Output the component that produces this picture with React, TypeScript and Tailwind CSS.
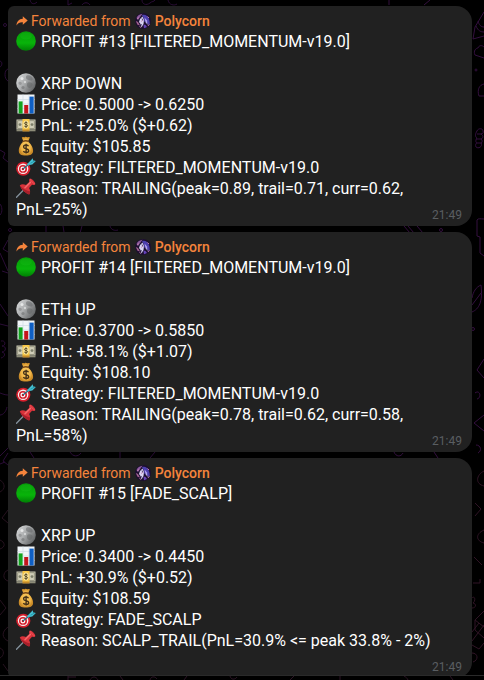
import type { ReactNode } from 'react';

type IconName = 'green' | 'moon' | 'chart' | 'money' | 'bag' | 'target' | 'pin';

type Message = {
    id: number;
    strategy: string;
    asset: string;
    price: string;
    pnl: string;
    equity: string;
    reason: string;
    time: string;
};

const messages: Message[] = [
    {
        id: 13,
        strategy: 'FILTERED_MOMENTUM-v19.0',
        asset: 'XRP DOWN',
        price: '0.5000 -> 0.6250',
        pnl: '+25.0% ($+0.62)',
        equity: '$105.85',
        reason: 'TRAILING(peak=0.89, trail=0.71, curr=0.62, PnL=25%)',
        time: '21:49',
    },
    {
        id: 14,
        strategy: 'FILTERED_MOMENTUM-v19.0',
        asset: 'ETH UP',
        price: '0.3700 -> 0.5850',
        pnl: '+58.1% ($+1.07)',
        equity: '$108.10',
        reason: 'TRAILING(peak=0.78, trail=0.62, curr=0.58, PnL=58%)',
        time: '21:49',
    },
    {
        id: 15,
        strategy: 'FADE_SCALP',
        asset: 'XRP UP',
        price: '0.3400 -> 0.4450',
        pnl: '+30.9% ($+0.52)',
        equity: '$108.59',
        reason: 'SCALP_TRAIL(PnL=30.9% <= peak 33.8% - 2%)',
        time: '21:49',
    },
];

// Emoji drawings, all on a 20x20 grid
const icons: Record<IconName, ReactNode> = {
    green: (
        <>
            <circle cx="10" cy="10" r="9.8" fill="url(#gGreen)" />
            <ellipse cx="10" cy="5" rx="6" ry="3.4" fill="#2fe02f" opacity="0.15" />
        </>
    ),
    moon: (
        <>
            <circle cx="10" cy="10" r="9.8" fill="url(#gMoon)" />
            <path d="M11 2.5c2.5-.6 5 1 5.6 3 .5 2-1 2.4-2.6 1.8-1.8-.5-4-.8-4-2.6 0-1 .2-2 1-2.2Z" fill="#626465" opacity="0.5" />
            <path d="M12 9.5c2-.6 5 .4 4.6 2.5-.6 2-2.6 3.600-4.300 2.600-1.600-1-2-4.400-.3-5.100Z" fill="#5a5c5d" opacity="0.4" />
            <path d="M3 9c1.5-.8 3 .3 2.8 1.8-.2 1.4-2.300 1.400-3 .4-.5-.8-.5-1.800.2-2.200Z" fill="#8a8c8d" opacity="0.7" />
            <circle cx="7" cy="14.5" r="1.6" fill="#77797a" opacity="0.7" />
            <circle cx="6" cy="5.5" r="1.5" fill="#f0f1f1" opacity="0.8" />
            <circle cx="9" cy="9" r="1.2" fill="#dfe0e0" opacity="0.8" />
        </>
    ),
    chart: (
        <>
            <rect x="1.5" y="0.5" width="17" height="19" fill="#f1f5f8" />
            <path d="M1.500 5.500h17M1.500 10h17M1.500 14.500h17M7 .5v19M13 .5v19" stroke="#cfdbe4" strokeWidth="0.7" />
            <rect x="2.6" y="7.4" width="4" height="12.1" fill="#13a41e" />
            <rect x="8.2" y="11" width="4" height="8.5" fill="#c4161c" />
            <rect x="13.5" y="2.6" width="4.2" height="16.9" fill="#0f5fc4" />
        </>
    ),
    money: (
        <>
            <path d="M.5 4.500h19v10H.5Z" fill="#cfcdb8" />
            <path d="M.5 14.500h19v1.800H.5Z" fill="#8d8c78" />
            <rect x="1.7" y="5.7" width="16.6" height="7.800" fill="none" stroke="#8b8b76" strokeWidth="0.8" />
            <circle cx="4" cy="9.600" r="1.400" fill="#7b7d69" />
            <circle cx="16" cy="9.600" r="1.400" fill="#7b7d69" />
            <path d="M6.500 4h7v11h-7Z" fill="#f6c545" />
            <path d="M6.500 14.500h7v2h-7Z" fill="#c48a2a" />
            <ellipse cx="10" cy="9.600" rx="2.800" ry="4" fill="#fbe9a6" />
            <path d="M11.600 8.100c-.5-.9-3.200-1.100-3.200.3 0 1.500 3.200.7 3.200 2.300 0 1.500-2.900 1.300-3.400.2M10 6.300v6.600" fill="none" stroke="#54441b" strokeWidth="0.9" />
        </>
    ),
    bag: (
        <>
            <path d="M7.500 5.600 5.800 1.800C6.200.3 8 1.600 9 .9c1-.7 1.700.6 2.700.3 1-.4 2.500-.5 2 .8l-1.800 3.600c2.600 1.800 5.200 5.600 5.200 9.200 0 3.500-2.700 4.700-7.300 4.700s-7-1.200-7-4.700c0-3.700 2.200-7.400 4.700-9.200Z" fill="url(#gBag)" />
            <path d="M7 5.400c1.800-.7 3.800-.7 5.500 0" stroke="#75481a" strokeWidth="1.5" fill="none" strokeLinecap="round" />
            <path d="M12.500 10.200c-.8-1.700-4.900-1.600-4.900.7 0 2.500 5.100 1.200 5.100 3.800 0 2.300-4.500 2.200-5.300.2M10.100 7.700v9.900" fill="none" stroke="#443018" strokeWidth="1.400" />
        </>
    ),
    target: (
        <>
            <ellipse cx="7.3" cy="11.8" rx="7.1" ry="7" fill="#d51f2c" />
            <ellipse cx="7.1" cy="11.8" rx="5.3" ry="5.2" fill="#f8eeee" />
            <ellipse cx="7" cy="11.9" rx="4" ry="3.9" fill="#d51f2c" />
            <ellipse cx="6.9" cy="12" rx="2.5" ry="2.4" fill="#fff" />
            <circle cx="6.9" cy="12" r="1.2" fill="#c31723" />
            <path d="m7 12 6.500-5.500" stroke="#1f6f83" strokeWidth="1.1" />
            <path d="m11.600 8 4-3.700" stroke="#3cbfd0" strokeWidth="2.3" />
            <path d="m13.200 5.500 3.400-4.300.7 2.300 2.600.6-3.600 3.500-2.800.3Z" fill="#45bfd0" />
            <path d="m14.500 6.200 4.300-2.300" stroke="#16899d" strokeWidth="0.7" />
        </>
    ),
    pin: (
        <>
            <path d="m.5 19.300 8-8.300" stroke="#83919c" strokeWidth="1.3" strokeLinecap="round" />
            <path d="M3.800 7.200c2-1.400 4.300-1 6.200-.1l3.300-3.200c-.4-1.500-.3-3 .6-3.300 1.400-.5 5.700 3.600 5.400 5.300-.2 1-1.800 1.200-3.300.9l-2.900 3.300c1.100 2 1.500 4.700.1 6.400-1.700-.4-3.600-1.600-5.300-3.200C6 11.500 4.400 9.300 3.800 7.200Z" fill="#d8323a" />
            <path d="M3.800 7.200c.8 2.100 2.200 4.300 4.100 6.100 1.700 1.600 3.600 2.800 5.300 3.200.8-1 1-2.100.9-3.300-3.100-.2-7.600-2.500-10.300-6Z" fill="#a9202b" />
            <path d="m9 9.700 5.400-5.300" stroke="#f3696b" strokeWidth="1.5" strokeLinecap="round" />
            <path d="M14.300 1.300c.7 1.700 2.500 3.600 4.500 4.700" stroke="#ee5559" strokeWidth="1" fill="none" />
        </>
    ),
};

function Emoji({ name }: { name: IconName }) {
    return (
        <svg viewBox="0 0 20 20" aria-hidden="true" className="inline-block size-5 mr-[5px] align-[-4px]">
            {icons[name]}
        </svg>
    );
}

function Avatar() {
    return (
        <svg viewBox="0 0 16 16" aria-hidden="true" className="size-4 ml-1 mr-1">
            <circle cx="8" cy="8" r="8" fill="#1d1030" />
            <path d="M1.500 5c1-2.500 3.500-4 6-4.200L5.500 3.500 3 7Z" fill="#8a5a9c" />
            <path d="M7 2c3-1 5.500.5 6.500 3s1.800 5 .8 7c-1.300-.5-2-2.500-2.800-4L9.500 9 8.500 5Z" fill="#4d3fae" />
            <path d="m5 6 2.500-2.500L9 7l-.5 4-2 3.500-1-3.500-1.500-2Z" fill="#d8d2f2" />
            <path d="m9.500 4.500 2.500 3 .7 4.500-2-2.500Z" fill="#b4a5ef" />
            <path d="m.8 8 2.200 1 2 3.500-2.500-.8Z" fill="#a2618f" />
            <path d="m8.500 11.500 2 .5 1.500 2-3 1.200Z" fill="#6644b8" />
            <path d="m2 6 2-1.500M6 8.500l1.500-1M12.500 3.500 14 5M13 13l1.300-1.800M4.500 13.500l1.500 1" stroke="#c682ae" strokeWidth="0.9" />
            <path d="m7 5.500.8 2M6 11l.7 1.500" stroke="#2b1c4f" strokeWidth="0.8" />
        </svg>
    );
}

// Faint chat wallpaper that shows between and beside the bubbles
function Wallpaper() {
    return (
        <>
            <svg viewBox="0 0 180 680" fill="none" stroke="#2a0d36" aria-hidden="true" className="absolute left-0 top-0 h-[680px] w-[180px]">
                <circle cx="5" cy="25" r="1.5" />
                <path d="M8 69c-4 1-4 10 0 12M0 61c3 1 2 5 0 6M0 150l5 3-2 5 5 4M0 204c2 2 3 8 0 11" />
                <circle cx="10" cy="230" r="1.500" />
                <path d="M8 240 3 249l5 3M0 253l8 18M2 271l6 2M0 304l8 12M0 324l8 2M1 341c5-1 5 5 1 5 5 0 4 6 0 6 4 1 3 5-1 6M0 393c3 1 5 2 8 2M7 407c-1 5-4 8-7 8M8 448l-8 8M8 453l-5 8 5 4M0 464l5-2" />
                <path d="M30 0c1 4 4 5 7 2M68 0v5l4-2M82 5c2-3 6-3 8 0M142 0c0 4 4 6 8 3 2-2 4-1 5-3M168 0c1 5 6 6 9 4M46 226v7M63 226l1 6M82 226l-2 7M110 226c1 4 5 5 8 4M30 452l4 6M70 452c3 5 8 5 11 1M120 452v6M150 458l5-6" />
                <path stroke="#26121f" d="M0 480c5 3 6 9 0 12M8 510l-6 8 6 5M0 540c5 2 6 7 0 9M8 570c-5 2-6 9 0 11M0 600l6 8-6 7M8 627c-7 5-6 11 0 14M0 648c5 2 4 8 0 10M3 664l5 7" />
            </svg>
            <svg viewBox="0 0 100 680" fill="none" stroke="#34103f" aria-hidden="true" className="absolute right-0 top-0 h-[680px] w-[100px]">
                <path d="M20 226l6 7M24 226l6 7M33 226l6 7M10 452c2 5 7 5 9 1M50 452l4 6M5 0v5M40 5l6-5" />
                <circle cx="57" cy="230" r="1.500" />
                <path d="M100 12 91 27l-2 12 11-3M92 26c2 5 5 6 8 6M94 21c1 4 3 6 6 6M91 55c-2-4 1-7 3-7 1-3 4-3 6-1M91 55l9 3M95 96c-2-6 0-11 5-12M95 96h5" />
                <circle cx="92" cy="70" r="1" />
                <path d="M93 131c1-3 6-3 6 0 1 2-1 3-2 3 2 1 3 4 0 5 2 1 1 4 0 4 2 4-3 6-5 4-1-2 0-4 1-4-2-1-1-4 0-5-2-1-2-4 0-7ZM93 134h5M92 139h6M93 143h5M93 220c1-2 4-1 7-1M93 220v16l3 1v16l4 3M88 312c7-3 11-10 9-27-5 2-8 7-9 13M88 305l9-12" />
                <circle cx="89" cy="329" r="1.5" />
                <path d="M100 359l-7 11 7 8M91 393c5-4 7 5 2 6M100 415l-10 8 10 8M92 445c5 0 6 6 2 8" />
                <path stroke="#301526" d="M100 471c-8 4-9 13 0 15M91 503l6 6-6 7M100 530c-9 4-8 11 0 13M90 557l8 8M89 583h7v-4M88 598c3-3 4 3 1 5 4 1 3 5-1 5M100 611l-9 9v10l9 8M91 620l9 7M88 632l7-9M88 641l12-16M88 645l7 4 5-6M88 653c6 0 7 7 1 9" />
            </svg>
        </>
    );
}

function Bubble({ message }: { message: Message }) {
    return (
        <article className="relative rounded-l-md rounded-r-2xl bg-[#212121] px-2 pt-1 pb-1.5">
            <header className="flex h-[21px] items-center text-sm text-[#f5843c]">
                <svg viewBox="0 0 12 12" fill="currentColor" aria-hidden="true" className="size-3 mr-[3px]">
                    <path d="M6.800 1.300 11.700 5.500 6.800 9.800V7.300C4 7.100 2 8 .5 10.500.7 6.600 2.900 4 6.800 3.800Z" />
                </svg>
                <span>Forwarded from</span>
                <Avatar />
                <a href="#polycorn" className="font-medium">Polycorn</a>
            </header>
            <p><Emoji name="green" />{`PROFIT #${message.id} [${message.strategy}]`}</p>
            <p className="mt-[21px]"><Emoji name="moon" />{message.asset}</p>
            <p><Emoji name="chart" />{`Price: ${message.price}`}</p>
            <p><Emoji name="money" />{`PnL: ${message.pnl}`}</p>
            <p><Emoji name="bag" />{`Equity: ${message.equity}`}</p>
            <p><Emoji name="target" />{`Strategy: ${message.strategy}`}</p>
            <p>
                <Emoji name="pin" />{`Reason: ${message.reason}`}
                {/* keeps the last line clear of the time */}
                <span className="inline-block h-3 w-12" />
            </p>
            <time className="absolute right-2.5 bottom-1 text-xs leading-[14px] text-[#5a5e62]">{message.time}</time>
        </article>
    );
}

export default function App() {
    return (
        <main className="relative min-h-screen overflow-hidden bg-black pt-1.5 pr-3 pl-2 font-['Roboto',sans-serif] text-base leading-[21px] text-white">
            <svg aria-hidden="true" className="absolute size-0">
                <defs>
                    <linearGradient id="gGreen" x1="0" y1="0" x2="0" y2="1">
                        <stop offset="0" stopColor="#069c08" />
                        <stop offset="0.6" stopColor="#08b40a" />
                        <stop offset="1" stopColor="#007d04" />
                    </linearGradient>
                    <linearGradient id="gMoon" x1="0" y1="0" x2="1" y2="0.6">
                        <stop offset="0" stopColor="#dcdedf" />
                        <stop offset="0.5" stopColor="#adafb0" />
                        <stop offset="1" stopColor="#67696a" />
                    </linearGradient>
                    <radialGradient id="gBag">
                        <stop offset="0" stopColor="#ffd369" />
                        <stop offset="0.7" stopColor="#eeb345" />
                        <stop offset="1" stopColor="#c98a27" />
                    </radialGradient>
                </defs>
            </svg>
            <Wallpaper />
            <div className="relative flex flex-col gap-1.5">
                {messages.map((message) => (
                    <Bubble key={message.id} message={message} />
                ))}
            </div>
            {/* top edge of the composer, lies over the end of the chat */}
            <div className="absolute inset-x-0 bottom-0 h-[5px] border-t border-[#2a2a2a] bg-black">
                <svg viewBox="0 0 484 4" fill="none" stroke="#2c1526" aria-hidden="true" className="h-1 w-[484px]">
                    <path d="M68 0v4M68 1h8M90 4c2-4 6-4 8 0M120 0l3 4M150 4c1-4 5-4 7-1M184 4l3-4M230 0c1 4 5 4 7 1M290 4l4-4M340 0v4M404 0c2 1 3 2 4 4M450 0l3 4" />
                </svg>
            </div>
        </main>
    );
}
